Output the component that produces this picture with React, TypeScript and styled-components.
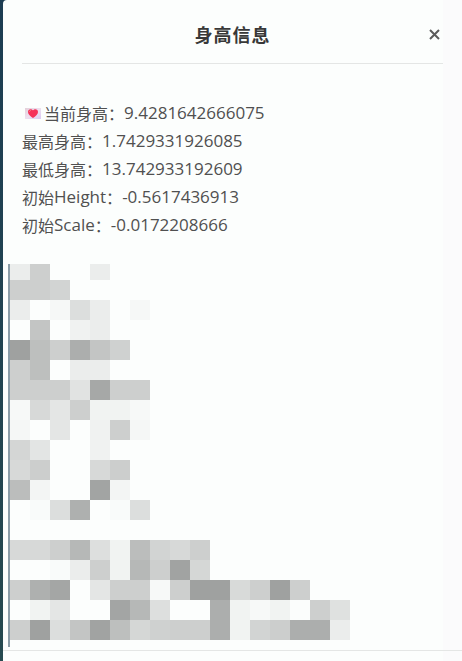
import React from "react";
import styled, { createGlobalStyle } from "styled-components";

const GlobalStyle = createGlobalStyle`
  * { box-sizing: border-box; }
  body {
    margin: 0;
    background: linear-gradient(#1c3d52, #264a50);
    font-family: "Noto Sans", "Noto Sans CJK SC", sans-serif;
    color: #505050;
  }
`;

const Dialog = styled.section`
  display: flex;
  flex-direction: column;
  min-height: 100vh;
  margin-left: 3px;
  border-top-left-radius: 4px;
  background: linear-gradient(to left, #fbfbfc 19px, #fcfefd 19px);
`;

const Header = styled.header`
  display: grid;
  grid-template-columns: 1fr auto 1fr;
  align-items: center;
  height: 64px;
  margin: 0 19px;
  padding-top: 5px;
  border-bottom: 1px solid #e4e6e5;
`;

const Title = styled.h1`
  grid-column: 2;
  margin: 0;
  font-family: "Noto Sans CJK SC", sans-serif;
  font-size: 18px;
  line-height: 24px;
  font-weight: 700;
  letter-spacing: 1px;
  color: #383838;
`;

const CloseButton = styled.button`
  display: flex;
  justify-self: end;
  padding: 3px;
  border: 0;
  background: none;
  color: #5b5b5b;
  cursor: pointer;
`;

const InfoList = styled.ul`
  list-style: none;
  margin: 35px 19px 25px;
  padding: 0;
`;

const InfoRow = styled.li`
  display: flex;
  align-items: center;
  height: 28px;
  font-family: "Noto Sans CJK SC", sans-serif;
  font-size: 16px;
  line-height: 28px;
  white-space: nowrap;
`;

const Latin = styled.span`
  font-family: "Open Sans", "Noto Sans", sans-serif;
  font-size: 17px;
`;

const HeartIcon = styled.svg`
  margin: 0 3px;
  flex: none;
`;

const Mosaic = styled.div`
  display: grid;
  grid-template-columns: repeat(17, 20px);
  grid-template-rows: 16px;
  grid-auto-rows: 20px;
  align-self: stretch;
  margin-left: 5px;
  padding-bottom: 7px;
  border-left: 2px solid #8b9da8;
`;

const tileColor = (tone: string) => {
  if (tone === "--") return "transparent";
  const level = parseInt(tone, 16);
  return `rgb(${level}, ${level + 2}, ${level + 1})`;
};

const Tile = styled.span<{ $tone: string }>`
  background: ${(p) => tileColor(p.$tone)};
`;

const Footer = styled.footer`
  flex: 1;
  margin-top: 3px;
  border-top: 1px solid #e4e6e5;
`;

const COLUMNS = 17;

const tones = [
  "eb cd -- -- eb",
  "cd cd d2",
  "eb -- f6 dc eb -- f6",
  "-- c3 -- f0 eb",
  "9f bd cd ac c3 cf",
  "cd bd -- eb eb",
  "cd cd cd e1 a6 cd cd",
  "f7 d7 e4 cd f1 f1 f7",
  "f5 -- e4 -- f0 cd f5",
  "d4 e3 -- -- f0",
  "d7 cc -- -- d7 cc",
  "bb f3 -- -- a2 f3",
  "-- f9 dc ae -- f9 dc",
  "--",
  "d7 d7 cd b6 dd f1 bb d2 d7 cd",
  "-- -- f9 eb cd f1 b6 cd a1 d5",
  "cd ae a4 -- e4 cd cd f7 cd 9f 9f d8 cd 9f cd",
  "-- f1 e4 -- -- a3 b6 dd -- -- ac f1 f7 f1 fb cd df",
  "cd 9f dc c3 a1 bd d5 cf cd cd ac f1 d2 cc ac ac eb",
].flatMap((line) => {
  const row = line.split(" ");
  return [...row, ...Array<string>(COLUMNS - row.length).fill("--")];
});

interface Info {
  label: string;
  latin?: string;
  value: string;
  heart?: boolean;
}

const infos: Info[] = [
  { label: "当前身高", value: "9.4281642666075", heart: true },
  { label: "最高身高", value: "1.7429331926085" },
  { label: "最低身高", value: "13.742933192609" },
  { label: "初始", latin: "Height", value: "-0.5617436913" },
  { label: "初始", latin: "Scale", value: "-0.0172208666" },
];

function Heart() {
  return (
    <HeartIcon width="16" height="11" viewBox="0 0 16 11" aria-hidden="true">
      <defs>
        <linearGradient id="card" x1="0" y1="0" x2="1" y2="1">
          <stop offset="0" stopColor="#e3cfd9" />
          <stop offset="0.5" stopColor="#eee0ef" />
          <stop offset="1" stopColor="#dcc8f3" />
        </linearGradient>
      </defs>
      <rect width="16" height="11" fill="url(#card)" />
      <path
        d="M8 10C5.5 8.300 3 6.400 3 3.900 3 2.200 4.200 1.200 5.600 1.200 6.700 1.200 7.600 1.800 8 2.600 8.400 1.800 9.300 1.200 10.400 1.200 11.800 1.200 13 2.200 13 3.900 13 6.400 10.500 8.300 8 10Z"
        fill="#f5305a"
      />
      <path d="M4.500 4C4.500 3 5 2.500 6 2.500" fill="none" stroke="#fb7d83" />
    </HeartIcon>
  );
}

export default function App() {
  return (
    <>
      <GlobalStyle />
      <Dialog role="dialog" aria-labelledby="dialog-title">
        <Header>
          <Title id="dialog-title">身高信息</Title>
          <CloseButton type="button" aria-label="关闭">
            <svg width="11" height="11" viewBox="0 0 11 11" aria-hidden="true">
              <path d="M1 1L10 10M10 1L1 10" stroke="currentColor" strokeWidth="2" />
            </svg>
          </CloseButton>
        </Header>
        <InfoList>
          {infos.map((info) => (
            <InfoRow key={info.label + (info.latin ?? "")}>
              {info.heart && <Heart />}
              {info.label}
              {info.latin && <Latin>{info.latin}</Latin>}：<Latin>{info.value}</Latin>
            </InfoRow>
          ))}
        </InfoList>
        <Mosaic aria-hidden="true">
          {tones.map((tone, i) => (
            <Tile key={i} $tone={tone} />
          ))}
        </Mosaic>
        <Footer />
      </Dialog>
    </>
  );
}
